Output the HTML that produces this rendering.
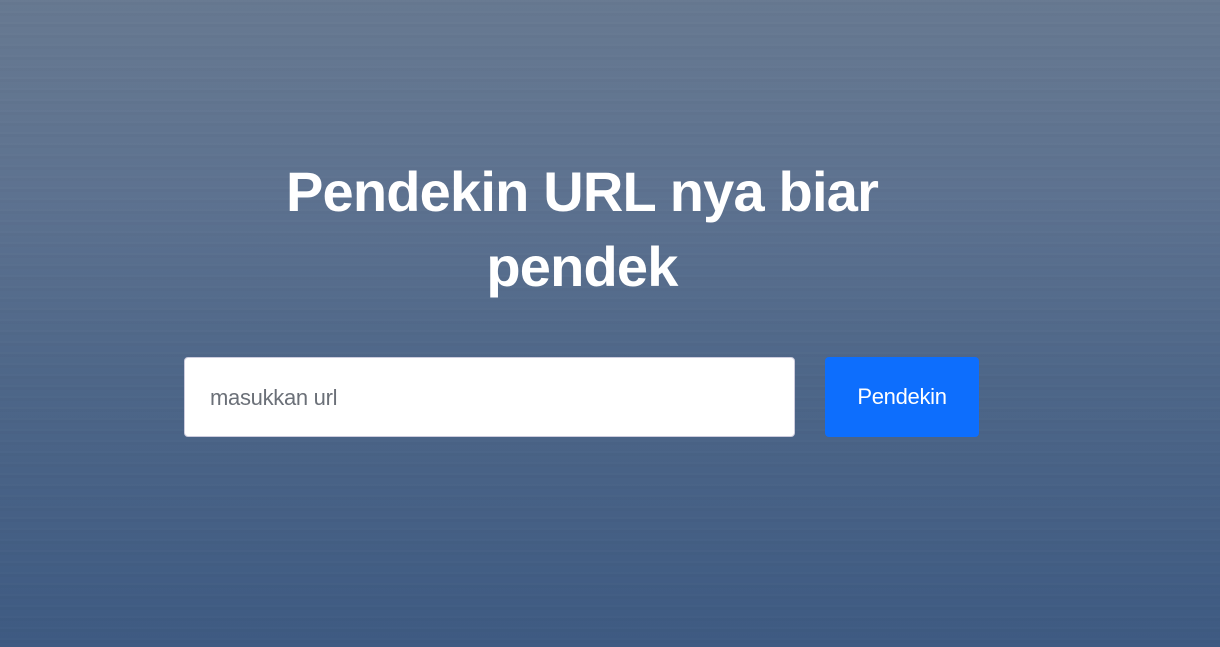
<!DOCTYPE html>
<html><head><meta charset="utf-8"><style>
html,body{margin:0;padding:0}
body{width:1220px;height:647px;overflow:hidden;position:relative;
background:linear-gradient(180deg,#677991 0%,#5d7290 30%,#4d6688 60%,#3e5a82 100%);
font-family:"Liberation Sans",sans-serif}
.tex{position:absolute;inset:0;background:repeating-linear-gradient(180deg,rgba(255,255,255,0.012) 0 2px,rgba(0,0,0,0.015) 2px 5px,rgba(255,255,255,0) 5px 11px)}
h1{position:absolute;left:182px;width:800px;top:154px;margin:0;text-align:center;color:#fff;font-weight:bold;font-size:56px;line-height:75px;letter-spacing:-0.8px}
.inp{position:absolute;left:184px;top:357px;width:609px;height:78px;background:#fff;border:1px solid #ccd;border-radius:4px}
.inp span{position:absolute;left:25px;top:27px;font-size:22px;color:#6b7078;letter-spacing:-0.3px}
.btn{position:absolute;left:825px;top:357px;width:154px;height:80px;background:#0d6efd;border-radius:4px;color:#fff;font-size:22px;text-align:center;line-height:80px;letter-spacing:-0.3px}
</style></head><body>
<div class="tex"></div>
<h1>Pendekin URL nya biar<br>pendek</h1>
<div class="inp"><span>masukkan url</span></div>
<div class="btn">Pendekin</div>
</body></html>
